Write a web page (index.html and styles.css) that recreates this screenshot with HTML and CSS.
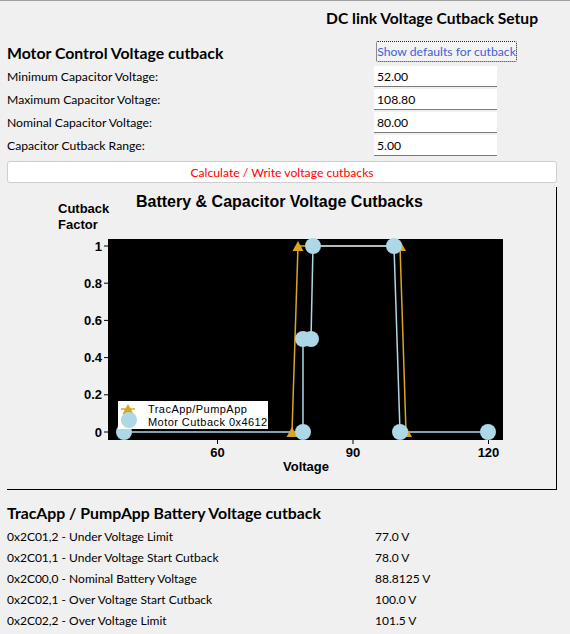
FILE: index.html
```html
<!DOCTYPE html>
<html>
<head>
<meta charset="utf-8">
<title>DC link Voltage Cutback Setup</title>
<link rel="stylesheet" href="styles.css">
</head>
<body>
<div class="page">
  <div class="title-bar"><h1 class="title">DC link Voltage Cutback Setup</h1></div>

  <div class="form">
    <h2 class="section-title">Motor Control Voltage cutback</h2>
    <button class="defaults-btn">Show defaults for cutback</button>
    <div class="label">Minimum Capacitor Voltage:</div><div class="field">52.00</div>
    <div class="label">Maximum Capacitor Voltage:</div><div class="field">108.80</div>
    <div class="label">Nominal Capacitor Voltage:</div><div class="field">80.00</div>
    <div class="label">Capacitor Cutback Range:</div><div class="field">5.00</div>
  </div>

  <button class="calc-btn">Calculate / Write voltage cutbacks</button>

  <div class="chart-panel">
    <svg class="chart" width="549" height="302" viewBox="7 188 549 302" xmlns="http://www.w3.org/2000/svg">
      <text class="chart-title" x="136" y="208">Battery &amp; Capacitor Voltage Cutbacks</text>
      <text class="axis-title" x="58" y="214">Cutback</text>
      <text class="axis-title" x="58" y="230">Factor</text>

      <rect x="108" y="240" width="395" height="201" fill="#000"/>

      <g class="ticks" stroke="#000" stroke-width="1">
        <line x1="104" y1="247" x2="108" y2="247"/>
        <line x1="104" y1="284.2" x2="108" y2="284.2"/>
        <line x1="104" y1="321.4" x2="108" y2="321.4"/>
        <line x1="104" y1="358.6" x2="108" y2="358.6"/>
        <line x1="104" y1="395.8" x2="108" y2="395.8"/>
        <line x1="104" y1="433" x2="108" y2="433"/>
        <line x1="217.5" y1="441" x2="217.5" y2="445"/>
        <line x1="353" y1="441" x2="353" y2="445"/>
        <line x1="488.5" y1="441" x2="488.5" y2="445"/>
      </g>
      <g class="tick-label y-labels">
        <text x="102" y="251.5">1</text>
        <text x="102" y="288.7">0.8</text>
        <text x="102" y="325.9">0.6</text>
        <text x="102" y="363.1">0.4</text>
        <text x="102" y="400.3">0.2</text>
        <text x="102" y="437.5">0</text>
      </g>
      <g class="tick-label x-labels">
        <text x="217.5" y="458">60</text>
        <text x="353" y="458">90</text>
        <text x="488.5" y="458">120</text>
      </g>
      <text class="axis-title x-title" x="306" y="472">Voltage</text>

      <polyline points="292,433 298,247 400,247 406,433" fill="none" stroke="#daa520" stroke-width="1.5"/>
      <polyline points="124,433 303,433 303,340 311,340 313,247 394,247 400,433 488,433" fill="none" stroke="#add8e6" stroke-width="1.5"/>

      <g fill="#daa520">
        <polygon points="292.5,252 303.5,252 298,242"/>
        <polygon points="286.5,438 297.5,438 292,428"/>
        <polygon points="395,252 406,252 400.5,242"/>
        <polygon points="401,438 412,438 406.5,428"/>
      </g>
      <g fill="#add8e6">
        <circle cx="124" cy="433" r="8"/>
        <circle cx="303" cy="433" r="8"/>
        <circle cx="303" cy="340" r="8"/>
        <circle cx="311" cy="340" r="8"/>
        <circle cx="313" cy="247" r="8"/>
        <circle cx="394" cy="247" r="8"/>
        <circle cx="400" cy="433" r="8"/>
        <circle cx="488" cy="433" r="8"/>
      </g>

      <rect x="118" y="402" width="150" height="28" fill="#fff"/>
      <line x1="121" y1="410" x2="135" y2="410" stroke="#daa520" stroke-width="1.5"/>
      <polygon points="122.5,415 133.5,415 128,405" fill="#daa520"/>
      <circle cx="129" cy="421" r="8" fill="#add8e6"/>
      <text class="legend-text" x="148" y="414">TracApp/PumpApp</text>
      <text class="legend-text" x="148" y="426.5">Motor Cutback 0x4612</text>
    </svg>
  </div>

  <h2 class="section-title battery-title">TracApp / PumpApp Battery Voltage cutback</h2>
  <div class="table">
    <div class="row"><span class="name">0x2C01,2 - Under Voltage Limit</span><span class="value">77.0 V</span></div>
    <div class="row"><span class="name">0x2C01,1 - Under Voltage Start Cutback</span><span class="value">78.0 V</span></div>
    <div class="row"><span class="name">0x2C00,0 - Nominal Battery Voltage</span><span class="value">88.8125 V</span></div>
    <div class="row"><span class="name">0x2C02,1 - Over Voltage Start Cutback</span><span class="value">100.0 V</span></div>
    <div class="row"><span class="name">0x2C02,2 - Over Voltage Limit</span><span class="value">101.5 V</span></div>
  </div>
</div>
</body>
</html>
```

FILE: styles.css
```css
html, body {
  margin: 0;
  padding: 0;
  background: #f0f0f0;
}

body {
  font-family: Lato, "Open Sans", sans-serif;
  font-size: 12px;
  color: #000;
}

.page {
  width: 570px;
  height: 634px;
  border-top: 1px solid #a0a0a0;
  box-sizing: border-box;
  overflow: hidden;
}

.title-bar {
  display: flex;
  justify-content: flex-end;
  padding: 7px 32px 0 0;
}

.title {
  margin: 0;
  font-size: 15.6px;
  line-height: 20px;
  font-weight: 700;
}

.form {
  display: grid;
  grid-template-columns: 367px 123px;
  grid-template-rows: 23px repeat(4, 21px);
  row-gap: 2px;
  padding-left: 7px;
  margin-top: 13px;
  align-items: center;
}

.section-title {
  margin: 0;
  font-size: 15.8px;
  font-weight: 700;
  line-height: 20px;
}

.defaults-btn {
  justify-self: start;
  align-self: start;
  margin-left: 2px;
  width: 141px;
  height: 21px;
  padding: 0;
  background: #f3f3f3;
  border: 1px dotted #222;
  border-radius: 2px;
  font-family: Lato, "Open Sans", sans-serif;
  font-size: 12.2px;
  color: #4161d8;
  white-space: nowrap;
}

.label {
  line-height: 21px;
  font-size: 12.2px;
}

.field {
  height: 21px;
  line-height: 21px;
  box-sizing: border-box;
  background: #fff;
  border-bottom: 1px solid #7a7a7a;
  padding-left: 3px;
  font-size: 12.2px;
}

.calc-btn {
  display: block;
  margin: 5px 0 0 7px;
  width: 550px;
  height: 22px;
  padding: 0;
  background: #fff;
  border: 1px solid #cfcfcf;
  border-radius: 3px;
  font-family: Lato, "Open Sans", sans-serif;
  font-size: 12.2px;
  color: #ff0000;
}

.chart-panel {
  margin: 4px 0 0 7px;
  width: 549px;
  height: 302px;
  border-right: 1px solid #000;
  border-bottom: 1px solid #000;
}

.chart {
  display: block;
}

.chart-title {
  font-family: "Liberation Sans", Arial, sans-serif;
  font-weight: 700;
  font-size: 16px;
  fill: #000;
}

.axis-title {
  font-family: "Liberation Sans", Arial, sans-serif;
  font-weight: 700;
  font-size: 13px;
  fill: #000;
}

.x-title {
  text-anchor: middle;
}

.tick-label {
  font-family: "Liberation Sans", Arial, sans-serif;
  font-weight: 700;
  font-size: 13px;
  fill: #000;
}

.y-labels {
  text-anchor: end;
}

.x-labels {
  text-anchor: middle;
}

.legend-text {
  font-family: "Liberation Sans", Arial, sans-serif;
  font-size: 11px;
  letter-spacing: 0.45px;
  fill: #000;
}

.battery-title {
  margin: 13px 0 0 7px;
}

.table {
  margin-top: 3px;
  padding-left: 7px;
}

.row {
  display: grid;
  grid-template-columns: 368px auto;
  line-height: 21px;
}
```
